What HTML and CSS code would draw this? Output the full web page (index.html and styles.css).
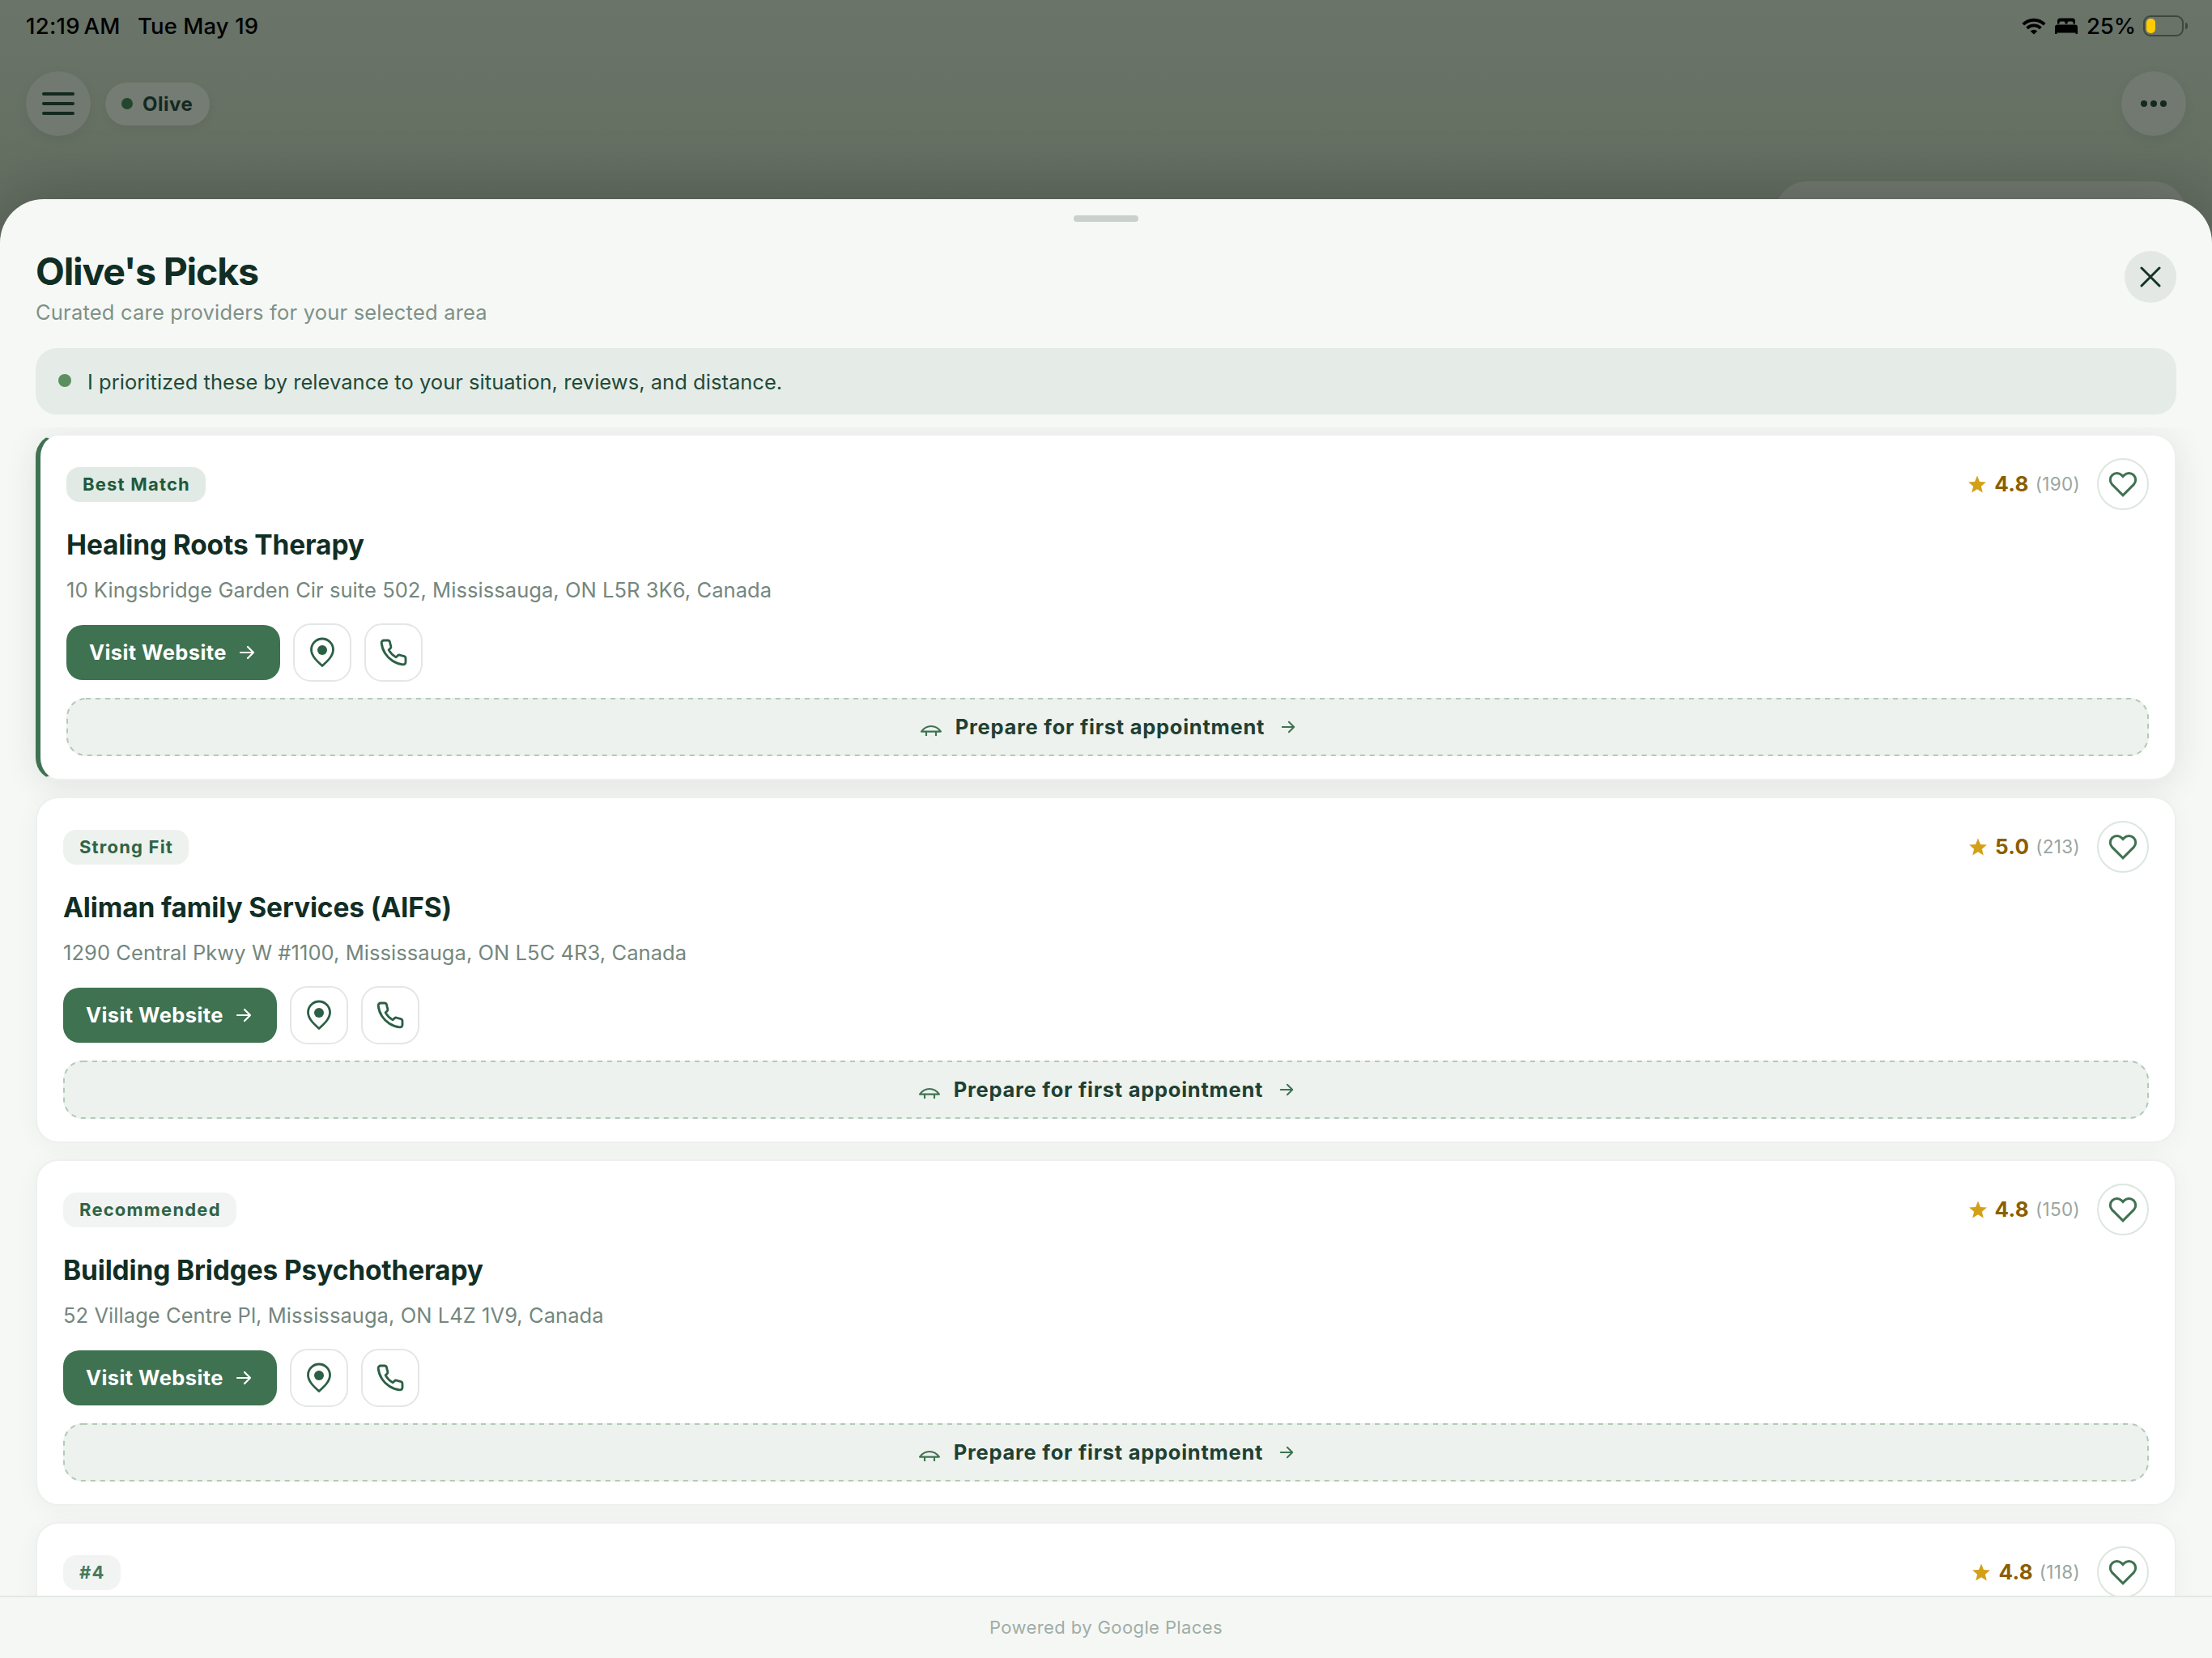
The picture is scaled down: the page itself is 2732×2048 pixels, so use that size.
FILE: index.html
```html
<!DOCTYPE html>
<html lang="en">
<head>
    <meta charset="utf-8">
    <meta name="viewport" content="width=device-width, initial-scale=1">
    <title>Olive's Picks</title>
    <link rel="stylesheet" href="styles.css">
</head>
<body>

<!-- shared icons -->
<svg class="sprite" width="0" height="0">
    <symbol id="i-star" viewBox="0 0 24 24"><path d="M12 1.600l3 7.300 7.900.6-6 5.200 1.900 7.700-6.800-4.200-6.800 4.200 1.900-7.700-6-5.200 7.900-.6z" fill="currentColor"/></symbol>
    <symbol id="i-heart" viewBox="0 0 24 24"><path d="M20.840 4.610a5.500 5.500 0 0 0-7.780 0L12 5.670l-1.060-1.060a5.500 5.500 0 0 0-7.780 7.780l1.060 1.060L12 21.230l7.780-7.780 1.060-1.060a5.500 5.500 0 0 0 0-7.780z" fill="none" stroke="currentColor" stroke-width="2"/></symbol>
    <symbol id="i-arrow" viewBox="0 0 20 20"><path d="M2 10h16M11 3l7 7-7 7" fill="none" stroke="currentColor" stroke-width="2.200" stroke-linecap="round" stroke-linejoin="round"/></symbol>
    <symbol id="i-pin" viewBox="0 0 40 40"><path d="M20 36.500C14 31 6.500 24.500 6.500 16.500a13.500 13.500 0 0 1 27 0C33.500 24.500 26 31 20 36.500z" fill="none" stroke="currentColor" stroke-width="2.800" stroke-linejoin="round"/><circle cx="20" cy="17" r="6" fill="currentColor"/></symbol>
    <symbol id="i-phone" viewBox="0 0 24 24"><path d="M22 16.920v3a2 2 0 0 1-2.180 2 19.790 19.790 0 0 1-8.630-3.070 19.500 19.500 0 0 1-6-6 19.790 19.790 0 0 1-3.070-8.670A2 2 0 0 1 4.110 2h3a2 2 0 0 1 2 1.720c.127.960.361 1.903.7 2.810a2 2 0 0 1-.45 2.110L8.090 9.910a16 16 0 0 0 6 6l1.270-1.270a2 2 0 0 1 2.110-.45c.907.339 1.850.573 2.810.7A2 2 0 0 1 22 16.920z" fill="none" stroke="currentColor" stroke-width="1.900" stroke-linejoin="round"/></symbol>
    <symbol id="i-couch" viewBox="0 0 28 28"><path d="M2 19.600h24C23 15.500 19 13 14 13S5 15.500 2 19.600zM8 19.600v5.400M20 19.600v5.400" fill="none" stroke="currentColor" stroke-width="2.100" stroke-linejoin="round"/></symbol>
</svg>

<div class="backdrop">
    <div class="status">
        <span class="time">12:19 AM</span>
        <span class="date">Tue May 19</span>
        <div class="status-right">
            <svg class="wifi" viewBox="0 0 30 21"><path d="M1.800 8.200a18.700 18.700 0 0 1 26.400 0M6.600 12.900a11.900 11.900 0 0 1 16.800 0" fill="none" stroke="#000" stroke-width="3.800"/><path d="M15 20.500l-4.300-4.100a6.200 6.200 0 0 1 8.600 0z"/></svg>
            <svg class="bed" viewBox="0 0 28 20"><path d="M3 7.500V4a3.500 3.500 0 0 1 3.500-3.500h15A3.500 3.500 0 0 1 25 4v3.500h-2.500V6a1.500 1.500 0 0 0-1.500-1.500h-4a1.500 1.500 0 0 0-1.500 1.500v1.500h-3V6A1.500 1.500 0 0 0 11 4.500H7A1.500 1.500 0 0 0 5.500 6v1.500zM0 11.500a3 3 0 0 1 3-3h22a3 3 0 0 1 3 3V20h-2.500v-1.500h-23V20H0z"/></svg>
            <span class="percent">25%</span>
            <div class="battery"><div class="charge"></div></div>
            <div class="battery-cap"></div>
        </div>
    </div>
    <div class="nav">
        <div class="round">
            <svg width="40" height="28" viewBox="0 0 40 28"><path d="M2 2h36M2 14h36M2 26h36" stroke="#14291f" stroke-width="4" stroke-linecap="round"/></svg>
        </div>
        <div class="chip"><i class="chip-dot"></i><span>Olive</span></div>
        <div class="round more">
            <svg width="32" height="8" viewBox="0 0 32 8" fill="#14291f"><circle cx="4" cy="4" r="4"/><circle cx="16" cy="4" r="4"/><circle cx="28" cy="4" r="4"/></svg>
        </div>
    </div>
    <div class="bubble"></div>
</div>

<div class="sheet">
    <div class="handle"></div>
    <div class="sheet-head">
        <div>
            <h1>Olive's Picks</h1>
            <p class="subtitle">Curated care providers for your selected area</p>
        </div>
        <button class="close">
            <svg width="26" height="26" viewBox="0 0 26 26"><path d="M2 2l22 22M24 2L2 24" stroke="#14332a" stroke-width="3" stroke-linecap="round"/></svg>
        </button>
    </div>
    <div class="note"><i class="note-dot"></i><span>I prioritized these by relevance to your situation, reviews, and distance.</span></div>

    <div class="list">
        <div class="card best">
            <div class="card-top">
                <span class="badge">Best Match</span>
                <svg class="star"><use href="#i-star"/></svg>
                <span class="score">4.8</span>
                <span class="count">(190)</span>
                <button class="fav"><svg><use href="#i-heart"/></svg></button>
            </div>
            <h2>Healing Roots Therapy</h2>
            <p class="address">10 Kingsbridge Garden Cir suite 502, Mississauga, ON L5R 3K6, Canada</p>
            <div class="actions">
                <button class="visit"><span>Visit Website</span><svg><use href="#i-arrow"/></svg></button>
                <button class="icon-btn"><svg class="pin"><use href="#i-pin"/></svg></button>
                <button class="icon-btn"><svg class="phone"><use href="#i-phone"/></svg></button>
            </div>
            <button class="prepare">
                <svg class="dashes"><rect/></svg>
                <svg class="couch"><use href="#i-couch"/></svg>
                <span>Prepare for first appointment</span>
                <svg class="go"><use href="#i-arrow"/></svg>
            </button>
        </div>

        <div class="card strong">
            <div class="card-top">
                <span class="badge">Strong Fit</span>
                <svg class="star"><use href="#i-star"/></svg>
                <span class="score">5.0</span>
                <span class="count">(213)</span>
                <button class="fav"><svg><use href="#i-heart"/></svg></button>
            </div>
            <h2>Aliman family Services (AIFS)</h2>
            <p class="address">1290 Central Pkwy W #1100, Mississauga, ON L5C 4R3, Canada</p>
            <div class="actions">
                <button class="visit"><span>Visit Website</span><svg><use href="#i-arrow"/></svg></button>
                <button class="icon-btn"><svg class="pin"><use href="#i-pin"/></svg></button>
                <button class="icon-btn"><svg class="phone"><use href="#i-phone"/></svg></button>
            </div>
            <button class="prepare">
                <svg class="dashes"><rect/></svg>
                <svg class="couch"><use href="#i-couch"/></svg>
                <span>Prepare for first appointment</span>
                <svg class="go"><use href="#i-arrow"/></svg>
            </button>
        </div>

        <div class="card">
            <div class="card-top">
                <span class="badge">Recommended</span>
                <svg class="star"><use href="#i-star"/></svg>
                <span class="score">4.8</span>
                <span class="count">(150)</span>
                <button class="fav"><svg><use href="#i-heart"/></svg></button>
            </div>
            <h2>Building Bridges Psychotherapy</h2>
            <p class="address">52 Village Centre Pl, Mississauga, ON L4Z 1V9, Canada</p>
            <div class="actions">
                <button class="visit"><span>Visit Website</span><svg><use href="#i-arrow"/></svg></button>
                <button class="icon-btn"><svg class="pin"><use href="#i-pin"/></svg></button>
                <button class="icon-btn"><svg class="phone"><use href="#i-phone"/></svg></button>
            </div>
            <button class="prepare">
                <svg class="dashes"><rect/></svg>
                <svg class="couch"><use href="#i-couch"/></svg>
                <span>Prepare for first appointment</span>
                <svg class="go"><use href="#i-arrow"/></svg>
            </button>
        </div>

        <div class="card last">
            <div class="card-top">
                <span class="badge">#4</span>
                <svg class="star"><use href="#i-star"/></svg>
                <span class="score">4.8</span>
                <span class="count">(118)</span>
                <button class="fav"><svg><use href="#i-heart"/></svg></button>
            </div>
        </div>
    </div>

    <div class="footer">Powered by Google Places</div>
</div>

</body>
</html>
```
FILE: styles.css
```css
* {
    box-sizing: border-box;
}

body {
    margin: 0;
    height: 2048px;
    overflow: hidden;
    display: flex;
    flex-direction: column;
    font-family: Inter, "Liberation Sans", sans-serif;
    color: #112e25;
}

button {
    font: inherit;
    border: 0;
    margin: 0;
    padding: 0;
    background: none;
}

h1, h2, p {
    margin: 0;
}

svg {
    display: block;
    flex: none;
}

.sprite {
    position: absolute;
}

/* dimmed page behind the sheet */
.backdrop {
    height: 306px;
    flex: none;
    background: linear-gradient(#6a7469, #667063 50%, #636d60);
}

.status {
    height: 64px;
    display: flex;
    align-items: center;
    padding: 0 30px 0 32px;
    font-size: 27.5px;
    font-weight: 500;
    color: #000;
    white-space: nowrap;
}

.time {
    width: 138px;
    letter-spacing: 0.3px;
    word-spacing: -3px;
}

.date {
    letter-spacing: 0.1px;
}

.status-right {
    display: flex;
    align-items: center;
    margin-left: auto;
}

.wifi {
    width: 30px;
    height: 21px;
}

.bed {
    width: 28px;
    height: 20px;
    margin-left: 11px;
}

.percent {
    width: 60px;
    margin: 0 10px 0 11px;
    letter-spacing: -0.1px;
}

.battery {
    width: 50px;
    height: 26px;
    padding: 2px;
    border: 2px solid #3f463f;
    border-radius: 9px;
}

.charge {
    width: 11px;
    height: 18px;
    border-radius: 5px;
    background: #ffcc00;
}

.battery-cap {
    width: 3px;
    height: 8px;
    margin-left: 2px;
    border-radius: 0 4px 4px 0;
    background: #3f463f;
}

.nav {
    display: flex;
    align-items: center;
    padding: 24px 32px 0;
}

.round {
    width: 80px;
    height: 80px;
    border-radius: 50%;
    display: flex;
    align-items: center;
    justify-content: center;
    background: #727970;
    box-shadow: 0 4px 16px rgba(0, 0, 0, 0.05);
}

.more {
    margin-left: auto;
}

.chip {
    height: 53px;
    width: 129px;
    margin-left: 18px;
    padding-left: 20px;
    display: flex;
    align-items: center;
    gap: 12px;
    border-radius: 27px;
    background: #757c73;
    box-shadow: 0 4px 12px rgba(0, 0, 0, 0.05);
    font-size: 24px;
    font-weight: 700;
    letter-spacing: 0.5px;
    color: #14291f;
}

.chip-dot {
    width: 14px;
    height: 14px;
    border-radius: 50%;
    background: #24462f;
}

.bubble {
    width: 508px;
    height: 82px;
    margin: 56px 32px 0 auto;
    border-radius: 40px;
    background: #727970;
}

/* bottom sheet, overlaps the page so its corners show it */
.sheet {
    position: relative;
    flex: 1;
    min-height: 0;
    margin-top: -60px;
    display: flex;
    flex-direction: column;
    background: #f6f8f5;
    border-radius: 54px 54px 0 0;
    box-shadow: 0 -8px 80px rgba(0, 0, 0, 0.2);
}

.handle {
    flex: none;
    width: 80px;
    height: 8px;
    margin: 20px auto 0;
    border-radius: 4px;
    background: #cad1cd;
}

.sheet-head {
    flex: none;
    display: flex;
    justify-content: space-between;
    height: 156px;
    padding: 28px 44px 0;
}

h1 {
    margin-top: 4px;
    font-size: 46.5px;
    line-height: 58px;
    font-weight: 700;
    letter-spacing: -1.2px;
}

.subtitle {
    margin-top: 5px;
    font-size: 25.5px;
    line-height: 34px;
    letter-spacing: 0.2px;
    color: #7f9188;
}

.close {
    width: 64px;
    height: 64px;
    margin-top: 8px;
    border-radius: 50%;
    display: flex;
    align-items: center;
    justify-content: center;
    background: #e3e8e4;
}

.note {
    flex: none;
    height: 82px;
    margin: 0 44px;
    padding-left: 28px;
    display: flex;
    align-items: center;
    gap: 20px;
    border-radius: 26px;
    background: #e5ece7;
    font-size: 25.5px;
    letter-spacing: 0.03px;
    color: #1f4a38;
}

.note-dot {
    width: 16px;
    height: 16px;
    margin-top: -2px;
    border-radius: 50%;
    background: #5c8f5f;
}

.list {
    flex: 1;
    min-height: 0;
    overflow: hidden;
    margin-top: 16px;
    padding: 8px 44px 0;
    display: flex;
    flex-direction: column;
    gap: 20px;
}

.card {
    flex: none;
    height: 428px;
    padding: 28px 32px;
    border: 2px solid #edf0ee;
    border-radius: 28px;
    background: #fff;
    background-clip: padding-box;
    box-shadow: 0 4px 32px rgba(20, 40, 30, 0.04);
}

.card.best {
    border-left: 6px solid #3f7251;
    box-shadow: 0 6px 40px rgba(20, 40, 30, 0.1);
}

.card-top {
    height: 64px;
    display: flex;
    align-items: center;
}

.badge {
    height: 43px;
    padding: 0 19px 0 20px;
    margin-right: auto;
    border-radius: 16px;
    font-size: 22px;
    line-height: 42px;
    font-weight: 700;
    letter-spacing: 1.2px;
    color: #2f6447;
    background: #f2f4f3;
}

.best .badge {
    color: #1f5a3c;
    background: #e2eae5;
}

.strong .badge {
    background: #edf2ee;
}

.last .badge {
    color: #477a5c;
}

.star {
    width: 24px;
    height: 24px;
    color: #d4a017;
}

.score {
    margin: -2px 0 0 9px;
    font-size: 26px;
    font-weight: 700;
    letter-spacing: 0.3px;
    color: #8b5e00;
}

.count {
    margin: -2px 0 0 8px;
    font-size: 22.5px;
    letter-spacing: 0.3px;
    color: #98a69f;
}

.fav {
    width: 64px;
    height: 64px;
    margin-left: 21px;
    border: 2px solid #dde6df;
    border-radius: 50%;
    display: flex;
    align-items: center;
    justify-content: center;
    color: #3f7251;
}

.fav svg {
    width: 36px;
    height: 36px;
}

h2 {
    margin-top: 22px;
    font-size: 33.5px;
    line-height: 42px;
    font-weight: 700;
    letter-spacing: -0.14px;
}

.address {
    margin-top: 18px;
    font-size: 25.5px;
    line-height: 34px;
    letter-spacing: 0.06px;
    color: #74877e;
}

.actions {
    display: flex;
    align-items: center;
    height: 72px;
    margin-top: 24px;
}

.visit {
    width: 264px;
    height: 68px;
    padding-left: 28px;
    display: flex;
    align-items: center;
    border-radius: 20px;
    font-size: 25.5px;
    font-weight: 700;
    letter-spacing: 0.42px;
    color: #fff;
    background: #3f7251;
}

.visit span {
    width: 185px;
    padding-bottom: 2px;
    text-align: left;
}

.visit svg {
    width: 20px;
    height: 20px;
}

.icon-btn {
    width: 72px;
    height: 72px;
    margin-left: 16px;
    border: 2px solid #e3e7e5;
    border-radius: 22px;
    display: flex;
    align-items: center;
    justify-content: center;
    color: #2c6045;
}

.pin {
    width: 40px;
    height: 40px;
}

.phone {
    width: 36px;
    height: 36px;
}

.prepare {
    position: relative;
    width: 100%;
    height: 72px;
    margin-top: 20px;
    display: flex;
    align-items: center;
    justify-content: center;
    border-radius: 24px;
    font-size: 25.5px;
    font-weight: 700;
    letter-spacing: 0.74px;
    color: #1f4033;
    background: #edf2ee;
}

.prepare span {
    padding-bottom: 2px;
}

.dashes {
    position: absolute;
    inset: 0;
    width: 100%;
    height: 100%;
}

.dashes rect {
    x: 1px;
    y: 1px;
    width: calc(100% - 2px);
    height: 70px;
    rx: 23px;
    fill: none;
    stroke: #b3cab6;
    stroke-width: 2px;
    stroke-dasharray: 6 6;
}

.couch {
    width: 28px;
    height: 28px;
    margin-right: 16px;
    color: #3f7251;
}

.go {
    width: 18px;
    height: 18px;
    margin-left: 20px;
    color: #3f7251;
}

.footer {
    flex: none;
    height: 77px;
    border-top: 2px solid #e3e8e5;
    font-size: 22px;
    line-height: 74px;
    letter-spacing: 0.4px;
    text-align: center;
    color: #9fada6;
    background: #f5f7f5;
}
```
